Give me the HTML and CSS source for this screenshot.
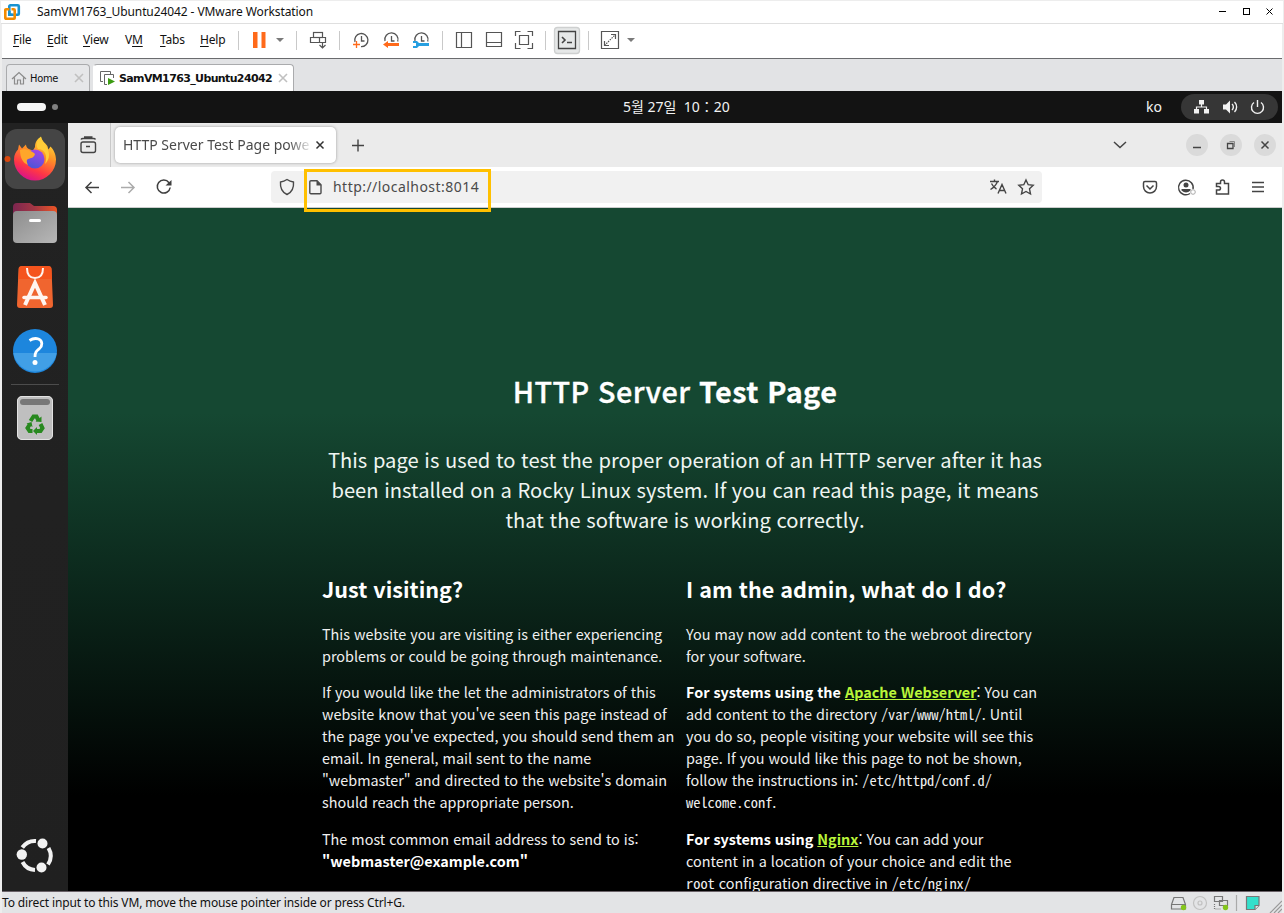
FILE: index.html
```html
<!DOCTYPE html>
<html lang="ko">
<head>
<meta charset="utf-8">
<title>SamVM1763_Ubuntu24042 - VMware Workstation</title>
<link rel="stylesheet" href="styles.css">
</head>
<body>
<div class="window">
  <header class="titlebar">
    <svg class="logo" width="18" height="18" viewBox="3 3 18 18" fill="none" stroke-width="2.600"><rect x="9.300" y="5.300" width="9.500" height="9.500" rx="1" stroke="#1a93d0"/><path d="M9.300 9.300H6a.7.700 0 0 0-.7.700v8a.7.700 0 0 0 .7.700h8a.7.700 0 0 0 .7-.700V10.300a1 1 0 0 0-1-1H11.500" stroke="#f38b00"/><path d="M9.300 11v3.800h3.200" stroke="#1a93d0"/></svg>
    <span class="title-text">SamVM1763_Ubuntu24042 - VMware Workstation</span>
    <svg class="win-buttons" width="64" height="22" viewBox="1214 1 64 22" fill="none" stroke="#000"><path d="M1219 11.500h7"/><rect x="1243.500" y="8.500" width="6" height="6"/><path d="m1266.500 8.500 6 6m0-6-6 6"/></svg>
  </header>

  <div class="menubar">
    <nav class="menu">
      <span class="m-file"><u>F</u>ile</span><span class="m-edit"><u>E</u>dit</span><span class="m-view"><u>V</u>iew</span><span class="m-vm">V<u>M</u></span><span class="m-tabs"><u>T</u>abs</span><span class="m-help"><u>H</u>elp</span>
    </nav>
    <i class="sep"></i>
    <svg width="57" height="33" viewBox="239 24 57 33"><path fill="#ff6a1a" d="M253 32h4.500v16H253zm8.500 0h4v16h-4z"/><path fill="#7a7a7a" d="M276 38h8l-4 4z"/></svg>
    <i class="sep"></i>
    <svg width="42" height="33" viewBox="297 24 42 33" fill="none" stroke="#555" stroke-width="1.200"><rect x="313.500" y="32.500" width="9" height="5"/><path d="M316.500 37.500h-6v5h9v-5m-1 0h7v5h-6M322.500 42v6m-3-3 3 3 3-3"/></svg>
    <i class="sep"></i>
    <svg width="102" height="33" viewBox="340 24 102 33" fill="none" stroke="#555" stroke-width="1.300"><path d="M355 42a6.600 6.600 0 1 1 6 4.700M361.500 36v5h3M385 41a6.600 6.600 0 1 1 12.700.5M391.500 36v5h3M415 41a6.600 6.600 0 1 1 12.700.5M421.500 36v5h3"/><path stroke="#ff6a1a" d="M353 44.500h7m-3.500-3.500v7"/><path fill="#ff6a1a" stroke="none" d="m383 44.500 5-3.500v2h11v3h-11v2z"/><path fill="#279fe0" stroke="none" d="M413 41h4l2 2h10v3h-10l-2 2h-4v-2h3v-3h-3z"/></svg>
    <i class="sep"></i>
    <svg width="102" height="33" viewBox="443 24 102 33" fill="none" stroke="#555" stroke-width="1.200"><path d="M456.500 32.500h15v15h-15zm5 0v15M486.500 32.500h15v14h-15zm0 10h15M519.500 35.500h9v9h-9zM515.500 36v-4.500h5m7 0h5V36m0 7v5.500h-5m-7 0h-5V43"/></svg>
    <i class="sep"></i>
    <svg width="42" height="33" viewBox="546 24 42 33" fill="none" stroke="#444" stroke-width="1.300"><rect x="554.500" y="27.500" width="25" height="26" rx="3" fill="#e6e8e8" stroke="#ced0d0"/><path d="M558.500 31.500h17v17h-17z"/><path stroke-width="1.600" d="m562 37 3 3-3 3M567 42.500h5"/></svg>
    <i class="sep"></i>
    <svg width="56" height="33" viewBox="589 24 56 33" fill="none" stroke="#555" stroke-width="1.200"><path d="M601.500 31.500h17v17h-17zM611 34.500h4.500V39M604.500 41v4.500h4.500"/><path stroke-dasharray="1.500 1" d="m604.500 45.500 11-11"/><path fill="#7a7a7a" stroke="none" d="M627 38h8l-4 4z"/></svg>
  </div>

  <div class="tabs">
    <div class="tab home"><svg width="16" height="16" viewBox="11 70 16 16" fill="none" stroke="#8b8b8b" stroke-width="1.200"><path d="m12 79 7-6.500 7 6.500M14.500 77.500v6.500h3v-4h3v4h3v-6.500"/></svg><span>Home</span><svg class="x" width="10" height="10" viewBox="0 0 10 10"><path d="m1 1 8 8m0-8-8 8"/></svg></div>
    <div class="tab vm"><svg width="16" height="16" viewBox="99 70 16 16" fill="none" stroke="#666" stroke-width="1"><path d="M103 81.500h-2.500v-10h10V74M107 84.500h-2.500v-10h9V78"/><path fill="#3c9b12" stroke="none" d="m108 78 7 3.500-7 3.500z"/></svg><span>SamVM1763_Ubuntu24042</span><svg class="x" width="10" height="10" viewBox="0 0 10 10"><path d="m1 1 8 8m0-8-8 8"/></svg></div>
  </div>

  <div class="guest">
    <div class="topbar">
      <div class="spaces"><i class="pill"></i><i class="dot"></i></div>
      <span class="clock">5월 27일&nbsp; 10：20</span>
      <div class="indicators"><span class="lang">ko</span>
        <svg width="97" height="26" viewBox="1181 94 97 26"><rect x="1181" y="94" width="97" height="26" rx="13" fill="#363636"/><path fill="#f2f2f2" d="M1199 100h5v4.500h-5zM1194 109h5v4.500h-5zm10 0h5v4.500h-5zM1223 104.500h3l4-4v13l-4-4h-3z"/><path fill="none" stroke="#f2f2f2" stroke-width="1.200" d="M1201.500 104v3m-5 3v-3h10v3"/><path fill="none" stroke="#f2f2f2" stroke-width="1.400" d="M1232 104a4 4 0 0 1 0 6m2.500-8a7 7 0 0 1 0 10M1254 102.500a6 6 0 1 0 7 0M1257.500 100v7"/></svg>
      </div>
    </div>

    <div class="desktop">
      <aside class="dock">
        <svg width="66" height="264" viewBox="2 123 66 264">
          <defs>
            <linearGradient id="fox" x1=".8" y1="0" x2=".35" y2="1"><stop offset="0" stop-color="#ffe83c"/><stop offset=".4" stop-color="#ff9226"/><stop offset=".75" stop-color="#ff3646"/><stop offset="1" stop-color="#d9128b"/></linearGradient>
            <linearGradient id="globe" x1=".7" y1="0" x2=".3" y2="1"><stop offset="0" stop-color="#a545e5"/><stop offset="1" stop-color="#4a55d8"/></linearGradient>
            <linearGradient id="folder" x2="1"><stop offset="0" stop-color="#7c2650"/><stop offset=".5" stop-color="#a43743"/><stop offset="1" stop-color="#ed5524"/></linearGradient>
            <linearGradient id="front" x2="1" y2="1"><stop offset="0" stop-color="#8d8d8d"/><stop offset="1" stop-color="#b7b7b7"/></linearGradient>
          </defs>
          <rect x="5" y="129" width="60" height="60" rx="12" fill="#454545"/><circle cx="7.500" cy="159" r="3" fill="#d9480f"/>
          <path fill="url(#fox)" d="M35 147c0-6 3-8 6-10.500 1 5 4 6 6 9 1 1.500 1 3 1.500 4l2-3c3 3 5.500 8 5.500 13a21 21 0 0 1-42 0c0-5 2-8 4-10l1-5 3 4 4-4c0 4 4 5 7 6z"/>
          <circle cx="35" cy="159" r="9.500" fill="url(#globe)"/>
          <path fill="#ffa62a" d="M20 150c5-2 12 1 15 4-1 4-4 4-7 5-2 1-1 4 0 6-5-2-8-7-8-15z"/><path fill="#ffcc39" d="M38 149c7 0 10 7 7 15 4-4 5-9 3-14-2-6-6-8-7-13-3 3-6 7-3 12z"/>
          <path fill="url(#folder)" d="M13 207q0-4 4-4h13l4 3h19q4 0 4 4v10H13z"/><rect x="13" y="211" width="44" height="32" rx="4" fill="url(#front)"/><rect x="29" y="219" width="12" height="3" rx="1.500" fill="#fff"/>
          <path fill="#f0652f" d="M23 266h25q3.500 0 3.500 3l1.500 36q0 3-3 3H20q-3 0-3-3l1.500-36q0-3 4.500-3z"/><path fill="#f5541d" d="M22 266h26q3 0 3.500 3l.5 10H18.500l.5-10q0-3 3-3z"/><path fill="none" stroke="#fff3ed" stroke-width="2" d="M27 268q0 10 8 10t8-10"/><path fill="none" stroke="#fff5f0" stroke-width="4" d="m25 305 10-22 10 22"/><path stroke="#fff5f0" stroke-width="3.500" stroke-linecap="round" d="M24 297.500h22"/>
          <circle cx="35" cy="351" r="22" fill="#1d86dd"/><path fill="#419fe6" d="M13.300 353a22 22 0 0 0 43.400 0z"/><path fill="none" stroke="#fff" stroke-width="2.800" d="M29.500 340.500q4.500-3 9-1.500c4.500 2 4 7 1 9.500-3 2.500-4.500 3.500-4.500 8.500"/><circle cx="35" cy="362.500" r="2.500" fill="#fff"/>
          <path stroke="#4c4c4c" d="M11 384.500h48"/>
        </svg>
        <svg width="66" height="56" viewBox="2 387 66 56"><rect x="17" y="396" width="36" height="44" rx="5" fill="#bfbfbf"/><rect x="17.500" y="396.500" width="35" height="43" rx="4.500" fill="none" stroke="#e2e2e2"/><rect x="20" y="399" width="30" height="6" rx="3" fill="#777"/><g fill="none" stroke="#28891f" stroke-width="4"><path d="m30.500 421 3-4.500h3l2 4M40.500 424l2 4-2 3H36M32.500 431h-3l-2-3 2.500-4"/></g><path fill="#28891f" d="m35.500 421.500 6 .5v-5.500zM37 427l-4 4 4 4zM26.500 423.500l5-1.500 1 5z"/></svg>
        <svg class="ubuntu" width="66" height="44" viewBox="2 834 66 44"><g fill="none" stroke="#f2f2f2" stroke-width="4"><path d="M22.300 847.500a15.500 15.500 0 0 1 13.700-6.500M48.500 848a15.500 15.500 0 0 1-.5 16.500M35 870a15 15 0 0 1-12.500-8"/></g><g fill="#f2f2f2"><circle cx="42.500" cy="843.500" r="5"/><circle cx="21.800" cy="854.500" r="5.200"/><circle cx="41.500" cy="867.500" r="5"/></g></svg>
      </aside>

      <div class="browser">
        <div class="tabstrip">
          <div class="view"><svg width="18" height="18" viewBox="79 136 18 18" fill="none" stroke="#444" stroke-width="1.400"><rect x="81" y="142" width="14.500" height="10.500" rx="2"/><path d="M81 139.500q.5-1 2-1h10.500q1.500 0 2 1M84 137h8.500M86 146.500h4"/></svg></div>
          <div class="page-tab"><span>HTTP Server Test Page powe</span><svg width="10" height="10" viewBox="0 0 10 10" stroke="#333" stroke-width="1.500"><path d="m1.500 1.500 7 7m0-7-7 7"/></svg></div>
          <svg class="plus" width="14" height="14" viewBox="0 0 14 14" stroke="#444" stroke-width="1.400"><path d="M1 7.500h12M7 1.500v12"/></svg>
          <svg class="tab-tools" width="172" height="44" viewBox="1110 123 172 44" fill="none" stroke="#444" stroke-width="1.500"><path d="m1114 142 6 5.500 6-5.500"/><g fill="#dadada" stroke="none"><circle cx="1197" cy="145" r="11"/><circle cx="1231" cy="145" r="11"/><circle cx="1265" cy="145" r="11"/></g><path d="M1193 147.500h8m60.500-6 7 7m0-7-7 7"/><path stroke-width="1.300" d="M1227.500 143.500h5.500v5h-5.500z"/><path stroke="#888" stroke-width="1" d="M1229.500 141.500h5v5.500"/></svg>
        </div>
        <div class="toolbar">
          <svg width="110" height="40" viewBox="78 167 110 40" fill="none" stroke="#3f3f3f" stroke-width="1.500"><path d="M99 187.500H86m5.500-5.500-5.500 5.500 5.500 5.500"/><path stroke="#ababab" d="M121 187.500h13m-5.500-5.500 5.500 5.500-5.500 5.500"/><path d="M169 182.700a6.500 6.500 0 1 0 1.200 4.800"/><path fill="#3f3f3f" stroke="none" d="M165.500 185.500h6V180z"/></svg>
          <div class="address"><svg width="52" height="32" viewBox="271 171 52 32" fill="none" stroke="#4a4a4a" stroke-width="1.400"><path d="M287 179.500q3 2 6.500 2.500c.5 6-1 10-6.500 12.500-5.500-2.500-7-6.500-6.500-12.500q3.500-.5 6.500-2.500zM311 180.700h6l4 4v8q0 1-1 1h-9q-1.200 0-1.200-1v-11q0-1 1.200-1z"/><path fill="#4a4a4a" stroke="none" d="M316.500 180.500v5h5z"/></svg><span>http://localhost:8014</span>
            <svg class="star" width="60" height="32" viewBox="982 171 60 32" fill="none" stroke="#444" stroke-width="1.400"><path d="M990 181.500h9m-4.500-2v2m3 0q-2 5-7 8m1-6q2 4 5 5.500M998 193.500l4-9 4 9m-6.500-3h5M1026 180l2.200 4.700 5 .6-3.700 3.500 1 5.200-4.500-2.500-4.500 2.500 1-5.200-3.700-3.500 5-.6z"/></svg>
          </div>
          <svg class="nav-tools" width="142" height="40" viewBox="1140 167 142 40" fill="none" stroke="#444" stroke-width="1.500"><path d="M1145 181.500h10q1.500 0 1.500 1.500v3.500a6.500 6.500 0 0 1-13 0V183q0-1.500 1.500-1.500zM1146.500 185.500l3.500 3.500 3.500-3.500"/><path d="M1190 193.500a7.300 7.300 0 1 1 3-4.500"/><circle cx="1186" cy="185" r="2.500" fill="#444" stroke="none"/><path fill="#444" stroke="none" d="M1181.500 189h9v1.500q-4.500 4-9 0z"/><circle cx="1193" cy="192" r="2.300" stroke="#aaa" stroke-width="1"/><path d="M1216.500 183.500h4v-1.500q0-2 2-2t2 2v1.500h4v10.500h-12v-4h2q2 0 2-1.800t-2-1.800h-2z"/><path d="M1252 182.500h12m-12 4.500h12m-12 4.500h12"/></svg>
        </div>
        <main class="page">
          <h1><span>HTTP Server</span> <strong>Test Page</strong></h1>
          <p class="lead">This page is used to test the proper operation of an HTTP server after it has<br>been installed on a Rocky Linux system. If you can read this page, it means<br>that the software is working correctly.</p>
          <div class="columns">
            <section>
              <h2>Just visiting?</h2>
              <p>This website you are visiting is either experiencing<br>problems or could be going through maintenance.</p>
              <p>If you would like the let the administrators of this<br>website know that you've seen this page instead of<br>the page you've expected, you should send them an<br>email. In general, mail sent to the name<br>"webmaster" and directed to the website's domain<br>should reach the appropriate person.</p>
              <p>The most common email address to send to is:<br><strong>"webmaster@example.com"</strong></p>
            </section>
            <section>
              <h2>I am the admin, what do I do?</h2>
              <p>You may now add content to the webroot directory<br>for your software.</p>
              <p><strong>For systems using the <a>Apache Webserver</a></strong>: You can<br>add content to the directory <code>/var/www/html/</code>. Until<br>you do so, people visiting your website will see this<br>page. If you would like this page to not be shown,<br>follow the instructions in: <code>/etc/httpd/conf.d/<br>welcome.conf</code>.</p>
              <p><strong>For systems using <a>Nginx</a></strong>: You can add your<br>content in a location of your choice and edit the<br><code>root</code> configuration directive in <code>/etc/nginx/</code></p>
            </section>
          </div>
        </main>
      </div>
    </div>
  </div>

  <footer class="status">
    <span>To direct input to this VM, move the mouse pointer inside or press Ctrl+G.</span>
    <svg width="114" height="21" viewBox="1168 892 114 21" fill="none" stroke="#777" stroke-width="1.200"><path d="m1174 897.500-2.500 7v4.500h14v-4.500l-2.500-7zm-2.500 7h14"/><g stroke="#c1c1c1"><circle cx="1200" cy="903" r="6.500"/><circle cx="1200" cy="903" r="2"/></g><path d="M1214.500 896.500h8v5h-8zm5 4h8v5h-8z" fill="#e3e4e6"/><path stroke-dasharray="1 1" d="M1214.500 904v5h7"/><g fill="#84c51d" stroke="none"><circle cx="1183.500" cy="907.500" r="2.700"/><circle cx="1225.500" cy="907.500" r="2.700"/></g><path stroke="#aaa" d="M1236.500 895v16"/><path fill="#34dfcb" d="M1246.500 896.500h12.500v9l-4 4h-8.500z"/><path fill="#e3e4e6" d="M1255 909.500v-4h4"/><path stroke="#999" d="m1270 913 12-12m-8 12 8-8m-4 8 4-4"/></svg>
  </footer>
  <div class="highlight"></div>
</div>
</body>
</html>
```
FILE: styles.css
```css
* { box-sizing: border-box; }
body { margin: 0; background: #f0f0f0; }
svg { display: block; flex: none; }
.window {
  position: relative;
  width: 1284px;
  height: 913px;
  overflow: hidden;
  display: flex;
  flex-direction: column;
  padding: 1px 2px 0 2px;
  background: #ededed;
  font-family: "Noto Sans", sans-serif;
  font-size: 12px;
  color: #111;
  white-space: nowrap;
}

.titlebar { height: 23px; margin: 0 -1px; background: #fff; border-bottom: 1px solid #dfdfdf; display: flex; align-items: center; padding-left: 2px; flex: none; }
.title-text { margin-left: 16px; padding-bottom: 2px; letter-spacing: -.09px; }
.win-buttons { margin-left: auto; margin-right: 5px; }

.menubar { height: 34px; padding-bottom: 1px; background: #fff; display: flex; align-items: center; flex: none; }
.menu { display: flex; width: 236px; padding: 0 0 2px 11px; letter-spacing: -.2px; }
.menu u { text-underline-offset: 2px; }
.m-file { width: 34px; }
.m-edit { width: 36px; }
.m-view { width: 42px; }
.m-vm { width: 35px; }
.m-tabs { width: 40px; }
.sep { width: 1px; height: 19px; background: #c9c9c9; flex: none; }

.tabs { height: 33px; background: #e2e3e5; border-top: 1px solid #6a6b6e; display: flex; align-items: flex-end; padding-left: 4px; gap: 3px; flex: none; }
.tab { height: 27px; border: 1px solid #aaabad; border-bottom: 0; border-radius: 4px 4px 0 0; display: flex; align-items: center; font-family: "DejaVu Sans Condensed", "DejaVu Sans", sans-serif; font-size: 11px; }
.tab .x { margin-left: auto; stroke: #c0c0c0; stroke-width: 1.6; }
.home { width: 84px; padding: 0 5px 0 4px; background: #e6e7e9; }
.home span { margin-left: 3px; letter-spacing: -.3px; }
.vm { width: 201px; padding: 0 5px; background: #fff; border-left-color: #fff; }
.vm span { margin-left: 4px; font-family: "DejaVu Sans", sans-serif; font-weight: bold; letter-spacing: -.63px; }

.guest { height: 800px; flex: none; display: flex; flex-direction: column; background: #000; }
.topbar { height: 32px; background: #131313; color: #f2f2f2; display: grid; grid-template-columns: 621px 108px 1fr; align-items: center; padding-right: 4px; flex: none; }
.spaces { display: flex; align-items: center; gap: 6px; padding-left: 15px; }
.pill { width: 29px; height: 8px; border-radius: 4px; background: #f5f5f5; }
.dot { width: 6px; height: 6px; border-radius: 3px; background: #808080; }
.clock { font-size: 14px; line-height: 20px; font-family: "Noto Sans", "Noto Sans CJK KR", sans-serif; }
.indicators { display: flex; justify-content: flex-end; align-items: center; gap: 19px; }
.lang { font-size: 14px; line-height: 20px; }

.desktop { flex: 1; display: flex; min-height: 0; }
.dock { width: 66px; background: linear-gradient(#222, #202020); display: flex; flex-direction: column; }
.ubuntu { margin-top: auto; margin-bottom: 13px; }
.browser { width: 1214px; display: flex; flex-direction: column; background: #fff; font-size: 14px; color: #4a4a4a; }
.tabstrip { height: 44px; background: #ebebeb; display: flex; align-items: center; flex: none; }
.view { width: 43px; height: 44px; border-right: 1px solid #c9c9c9; display: flex; align-items: center; padding-left: 11px; }
.page-tab { width: 221px; height: 36px; margin-left: 4px; background: #fff; border-radius: 5px; box-shadow: 0 0 3px #999; display: flex; align-items: center; padding: 0 12px 0 8px; }
.page-tab span { flex: none; width: 190px; padding-bottom: 2px; overflow: hidden; -webkit-mask-image: linear-gradient(90deg, #000 165px, transparent 190px); mask-image: linear-gradient(90deg, #000 165px, transparent 190px); }
.page-tab svg { margin-left: 2px; }
.plus { margin-left: 15px; }
.tab-tools { margin-left: auto; }
.toolbar { height: 41px; border-bottom: 1px solid #ccc; display: flex; align-items: center; padding-left: 10px; flex: none; }
.address { width: 771px; height: 32px; margin-left: 83px; border-radius: 4px; background: #f1f1f1; display: flex; align-items: center; }
.address span { margin-left: 10px; padding-bottom: 2px; letter-spacing: .46px; }
.star { margin-left: auto; }
.nav-tools { margin-left: auto; }

.page { flex: 1; min-height: 0; overflow: hidden; padding-top: 159px; color: #fff; background: linear-gradient(#154832 0, #154832 30%, #000 86%); font-family: "Noto Sans CJK KR", sans-serif; }
h1 { margin: 0; font-size: 28.8px; line-height: 48px; font-weight: 500; letter-spacing: .43px; text-align: center; }
h1 span { -webkit-text-stroke: .35px #fff; }
h1 strong { font-weight: 700; -webkit-text-stroke: .3px #fff; }
.lead { margin: 30px 0 0 20px; font-size: 20.16px; line-height: 30px; text-align: center; color: #f0f5f2; }
.columns { display: grid; grid-template-columns: 364px 364px; margin: 39px 0 0 254px; }
h2 { margin: 0; font-size: 21.6px; line-height: 30px; font-weight: 700; }
h2 + p { margin-top: 19px; }
.columns p { margin-bottom: 0; font-size: 14.4px; line-height: 22px; color: #f0f0f0; }
.columns p + p { margin-top: 14.4px; }
.columns strong { color: #fff; }
.columns a { color: #b9f53a; text-decoration: underline; }
code { font-family: "Noto Sans Mono CJK KR", "Liberation Mono", monospace; font-size: 14.4px; line-height: 1; }

.status { height: 22px; background: #e3e4e6; border-top: 1px solid #6a6268; display: flex; justify-content: space-between; align-items: center; flex: none; }
.status span { letter-spacing: -.135px; }
.highlight { position: absolute; left: 304px; top: 169px; width: 187px; height: 43px; border: 3px solid #ffc000; }
```
